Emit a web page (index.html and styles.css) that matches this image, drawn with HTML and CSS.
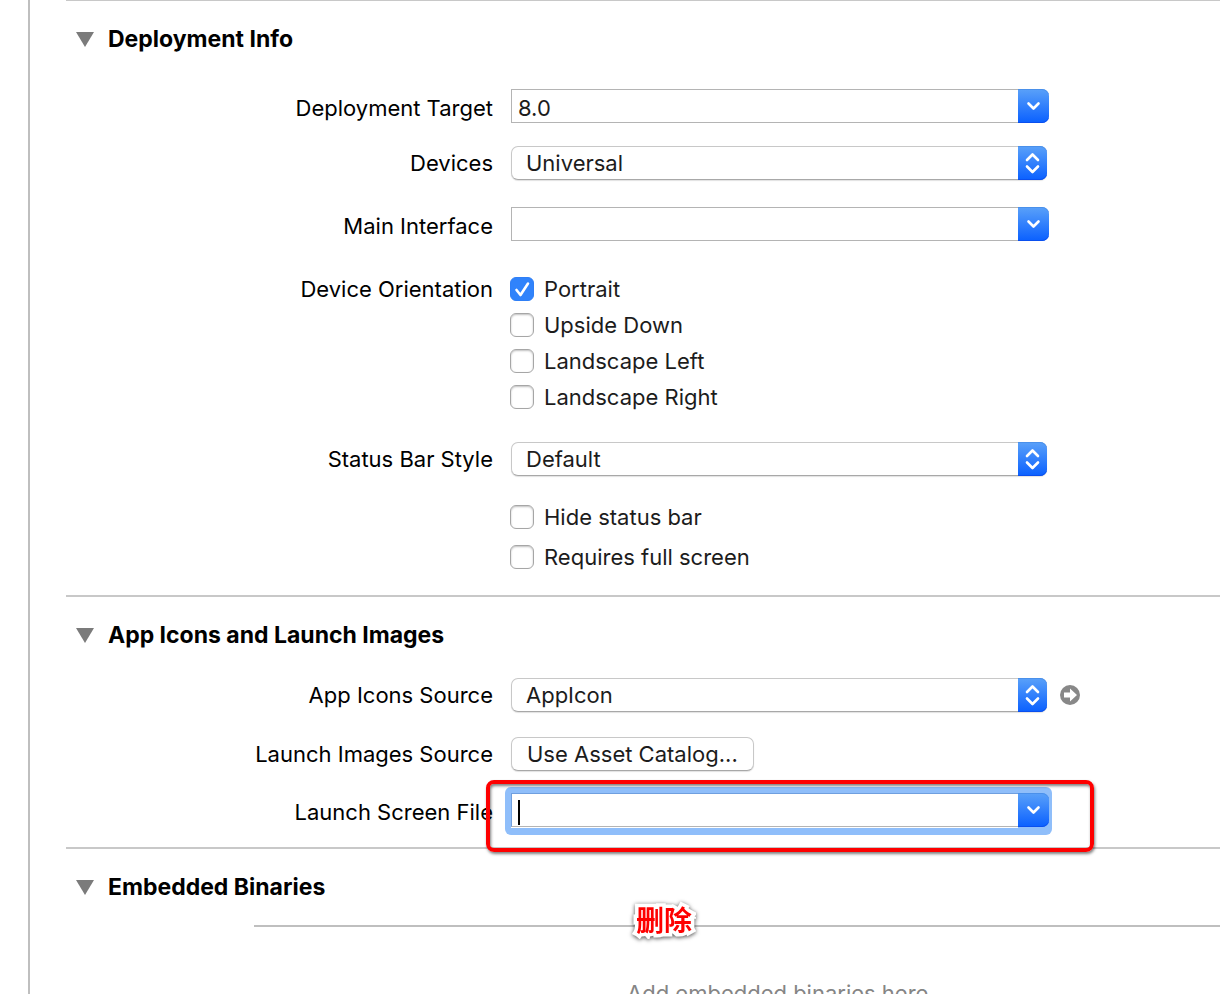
FILE: index.html
```html
<!DOCTYPE html>
<html lang="en">
<head>
    <meta charset="UTF-8">
    <meta name="viewport" content="width=device-width, initial-scale=1.0">
    <title>Deployment Info</title>
    <link rel="stylesheet" href="styles.css">
</head>
<body>
    <main class="editor">
        <section class="section">
            <h2 class="section-title">
                <svg class="triangle" viewBox="0 0 18 15"><path d="M0 0h18L9 15z"/></svg>
                Deployment Info
            </h2>
            <div class="row row-combo row-first">
                <label class="name" for="target">Deployment Target</label>
                <div class="combo">
                    <input type="text" id="target" value="8.0">
                    <button type="button" class="arrow" aria-label="Show targets">
                        <svg viewBox="0 0 31 34"><path d="M10.500 14.500l5 5 5-5"/></svg>
                    </button>
                </div>
            </div>
            <div class="row row-popup">
                <label class="name" for="devices">Devices</label>
                <div class="popup">
                    <select id="devices"><option>Universal</option><option>iPhone</option><option>iPad</option></select>
                    <span class="arrow"><svg viewBox="0 0 29 34"><path d="M9 14l5.500-5.500 5.500 5.500M9 20.500l5.500 5.500 5.500-5.500"/></svg></span>
                </div>
            </div>
            <div class="row row-combo">
                <label class="name" for="interface">Main Interface</label>
                <div class="combo">
                    <input type="text" id="interface">
                    <button type="button" class="arrow" aria-label="Show interfaces">
                        <svg viewBox="0 0 31 34"><path d="M10.500 14.500l5 5 5-5"/></svg>
                    </button>
                </div>
            </div>
            <div class="row row-checks">
                <span class="name" id="orientation">Device Orientation</span>
                <div class="checks" role="group" aria-labelledby="orientation">
                    <label class="check"><input type="checkbox" checked>Portrait</label>
                    <label class="check"><input type="checkbox">Upside Down</label>
                    <label class="check"><input type="checkbox">Landscape Left</label>
                    <label class="check"><input type="checkbox">Landscape Right</label>
                </div>
            </div>
            <div class="row row-status">
                <label class="name" for="status">Status Bar Style</label>
                <div class="popup">
                    <select id="status"><option>Default</option><option>Light</option></select>
                    <span class="arrow"><svg viewBox="0 0 29 34"><path d="M9 14l5.500-5.500 5.500 5.500M9 20.500l5.500 5.500 5.500-5.500"/></svg></span>
                </div>
            </div>
            <div class="row row-options">
                <div class="checks checks-loose">
                    <label class="check"><input type="checkbox">Hide status bar</label>
                    <label class="check"><input type="checkbox">Requires full screen</label>
                </div>
            </div>
        </section>

        <section class="section section-icons">
            <h2 class="section-title">
                <svg class="triangle" viewBox="0 0 18 15"><path d="M0 0h18L9 15z"/></svg>
                App Icons and Launch Images
            </h2>
            <div class="row row-source">
                <label class="name" for="icons">App Icons Source</label>
                <div class="popup">
                    <select id="icons"><option>AppIcon</option></select>
                    <span class="arrow"><svg viewBox="0 0 29 34"><path d="M9 14l5.500-5.500 5.500 5.500M9 20.500l5.500 5.500 5.500-5.500"/></svg></span>
                </div>
                <button type="button" class="go" aria-label="Open AppIcon">
                    <svg viewBox="0 0 20 20"><circle cx="10" cy="10" r="10"/><path d="M4 7.500h6v-4l7 6.500-7 6.500v-4H4z"/></svg>
                </button>
            </div>
            <div class="row row-catalog">
                <span class="name" id="images">Launch Images Source</span>
                <button type="button" class="catalog" aria-describedby="images">Use Asset Catalog...</button>
            </div>
            <div class="row row-combo row-launch">
                <label class="name" for="launch">Launch Screen File</label>
                <div class="combo combo-focus">
                    <input type="text" id="launch">
                    <span class="caret"></span>
                    <button type="button" class="arrow" aria-label="Show launch files">
                        <svg viewBox="0 0 31 34"><path d="M10.500 14.500l5 5 5-5"/></svg>
                    </button>
                    <span class="highlight"></span>
                </div>
            </div>
        </section>

        <section class="section">
            <h2 class="section-title">
                <svg class="triangle" viewBox="0 0 18 15"><path d="M0 0h18L9 15z"/></svg>
                Embedded Binaries
            </h2>
            <div class="binaries">
                <span class="note" lang="zh">删除</span>
                <p>Add embedded binaries here</p>
            </div>
        </section>
    </main>
</body>
</html>
```
FILE: styles.css
```css
* {
    box-sizing: border-box;
}
body {
    margin: 0;
    height: 100vh;
    overflow: hidden;
    background-color: #fff;
    color: #000;
    font-family: Inter, "Liberation Sans", sans-serif;
    font-size: 22px;
    line-height: 28px;
}
input, select, button {
    font: inherit;
    color: #1c1c1c;
}
.editor {
    min-height: 100vh;
    margin-left: 28px;
    padding-left: 36px;
    border-left: 2px solid #bfbfbf;
}

/* sections */
.section {
    padding-top: 24px;
    padding-bottom: 26px;
    border-top: 2px solid #c8c8c8;
}
.section:first-child {
    border-top-width: 1px;
}
.section-icons {
    padding-bottom: 20px;
}
.section-title {
    display: flex;
    align-items: center;
    gap: 14px;
    margin: 0;
    padding-left: 10px;
    font-size: 23px;
    font-weight: 700;
}
.triangle {
    width: 18px;
    height: 15px;
    fill: #7b7b7b;
}

/* rows */
.row {
    display: grid;
    grid-template-columns: 427px minmax(0, 538px) auto;
    column-gap: 18px;
    justify-content: start;
    align-items: center;
}
.name {
    text-align: right;
}
.row-combo {
    margin-top: 27px;
}
.row-combo .name {
    padding-top: 4px;
}
.row-first {
    margin-top: 36px;
}
.row-popup {
    margin-top: 23px;
}
.row-checks {
    margin-top: 36px;
    align-items: start;
}
.row-checks .name {
    line-height: 24px;
}
.row-status {
    margin-top: 33px;
}
.row-options {
    margin-top: 29px;
}
.row-source {
    margin-top: 29px;
    column-gap: 11px;
    grid-template-columns: 434px minmax(0, 538px) auto;
}
.row-source .name {
    padding-right: 7px;
}
.row-catalog {
    margin-top: 25px;
}
.row-launch {
    margin-top: 22px;
}

/* combo boxes and pop-up menus */
.combo, .popup {
    position: relative;
    display: flex;
    height: 34px;
}
.popup {
    margin-right: 2px;
}
.combo input {
    flex: 1;
    min-width: 0;
    padding: 4px 6px 0;
    border: 1px solid #b4b4b4;
    border-right: 0;
    background-color: #fff;
    outline: none;
}
.popup select {
    flex: 1;
    min-width: 0;
    padding: 0 14px;
    appearance: none;
    border: 1px solid #c8c8c8;
    border-bottom-color: #a8a8a8;
    border-radius: 7px;
    background-color: #fff;
    box-shadow: 0 1px 1px rgba(0,0,0,0.12);
}
.arrow {
    width: 31px;
    height: 34px;
    padding: 0;
    border: 0;
    border-radius: 0 7px 7px 0;
    background: linear-gradient(#5aa1f9, #0a60ff);
    box-shadow: inset 0 -1px 0 #0a4fee, inset 0 1px 0 #4a90ea;
}
.popup .arrow {
    position: absolute;
    top: 0;
    right: 0;
    width: 29px;
    pointer-events: none;
}
.arrow svg {
    display: block;
    width: 100%;
    height: 34px;
    fill: none;
    stroke: #fff;
    stroke-width: 2.6;
    stroke-linecap: round;
    stroke-linejoin: round;
}
.go {
    width: 20px;
    height: 20px;
    padding: 0;
    border: 0;
    background: none;
}
.go svg {
    display: block;
    width: 20px;
    height: 20px;
    fill: #888;
}
.go path {
    fill: #fff;
}
.catalog {
    justify-self: start;
    height: 34px;
    padding: 0 15px;
    border: 1px solid #c8c8c8;
    border-bottom-color: #a8a8a8;
    border-radius: 7px;
    background-color: #fff;
    box-shadow: 0 1px 1px rgba(0,0,0,0.12);
}

/* focused field */
.combo-focus {
    z-index: 0;
}
.combo-focus::before {
    content: "";
    position: absolute;
    inset: -6px -3px -8px -6px;
    z-index: -1;
    border-radius: 6px;
    background-color: #8fbefa;
}
.combo-focus input {
    border-color: #6f9fdf;
    border-bottom-color: #b4b4b4;
    box-shadow: 0 1px 0 #fff;
}
.caret {
    position: absolute;
    top: 7px;
    left: 7px;
    width: 2px;
    height: 25px;
    background-color: #000;
}
.highlight {
    position: absolute;
    inset: -13px -45px -25px -25px;
    border: 4px solid #fe0000;
    border-radius: 8px;
    box-shadow: 1px 2px 3px rgba(0,0,0,0.5), inset 1px 2px 3px rgba(0,0,0,0.5);
    pointer-events: none;
}

/* check boxes */
.checks {
    grid-column: 2;
    display: flex;
    flex-direction: column;
    align-items: flex-start;
    gap: 12px;
    margin-left: -1px;
}
.checks-loose {
    gap: 16px;
}
.check {
    display: flex;
    align-items: center;
    gap: 10px;
    height: 24px;
    color: #1c1c1c;
}
.check input {
    appearance: none;
    width: 24px;
    height: 24px;
    margin: 0;
    border: 1px solid #a6a6a6;
    border-radius: 6px;
    background-color: #fff;
    box-shadow: inset 0 1px 2px rgba(0,0,0,0.25);
}
.check input:checked {
    border-color: #2f7ff6;
    background: #3083fb url("data:image/svg+xml,%3Csvg xmlns='http://www.w3.org/2000/svg' viewBox='0 0 22 22'%3E%3Cpath d='M5.500 12l4 5L17 5.500' fill='none' stroke='white' stroke-width='2.600' stroke-linecap='round' stroke-linejoin='round'/%3E%3C/svg%3E");
    box-shadow: none;
}

/* embedded binaries */
.binaries {
    position: relative;
    margin-top: 24px;
    margin-left: 188px;
    padding-top: 52px;
    padding-left: 373px;
    border-top: 2px solid #bfbfbf;
    color: #858585;
}
.binaries p {
    margin: 0;
    white-space: nowrap;
}
.note {
    position: absolute;
    top: -24px;
    left: 382px;
    color: #fe0000;
    font-family: "Noto Sans CJK SC", sans-serif;
    font-size: 28px;
    font-weight: 700;
    line-height: 32px;
    -webkit-text-stroke: 7px #fff;
    paint-order: stroke fill;
    stroke-linejoin: round;
    filter: drop-shadow(0 1px 2px rgba(0,0,0,0.7));
}
```
